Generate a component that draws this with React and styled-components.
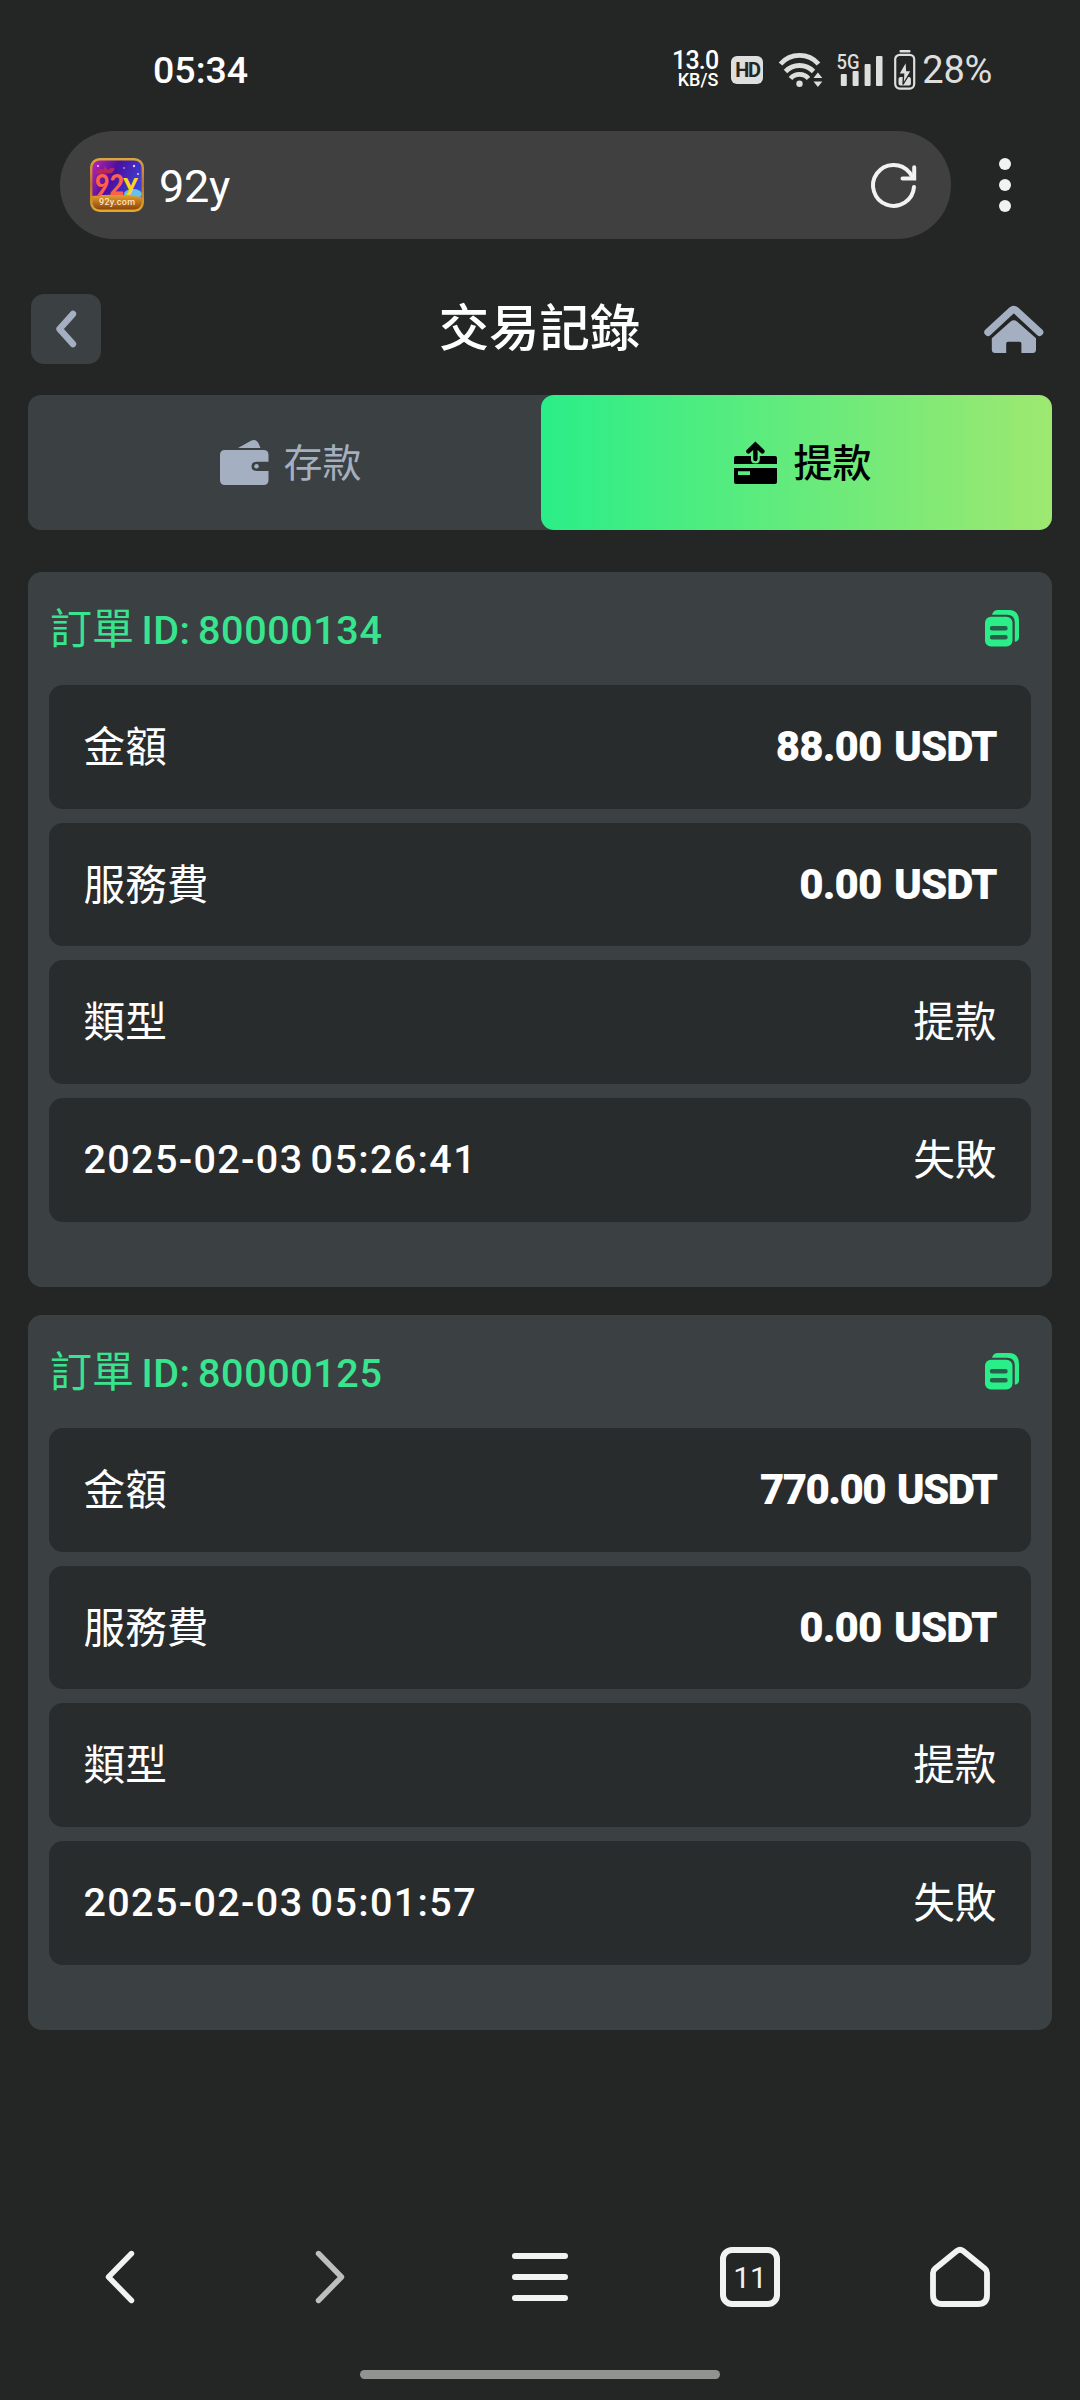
import React from "react";
import styled, { createGlobalStyle } from "styled-components";

const Colors = {
  page: "#242625",
  card: "#3b4042",
  row: "#292c2d",
  bar: "#404040",
  green: "#2aee88",
  lime: "#9ee870",
  steel: "#a4b0c1",
  light: "#f1f2f1",
  status: "#dededd",
  white: "#ffffff"
};

const Fonts = {
  cjk: `"Noto Sans CJK TC", "Noto Sans CJK SC", sans-serif`,
  roboto: `Roboto, "Noto Sans CJK TC", sans-serif`
};

const GlobalStyle = createGlobalStyle`
  * {
    box-sizing: border-box;
  }
  body {
    margin: 0;
    background: ${Colors.page};
  }
  svg {
    display: block;
    flex-shrink: 0;
    overflow: visible;
  }
`;

const Screen = styled.div`
  width: 1080px;
  height: 2400px;
  display: flex;
  flex-direction: column;
  background: ${Colors.page};
  color: ${Colors.white};
  font-family: ${Fonts.cjk};
  overflow: hidden;
`;

// status bar

const StatusBar = styled.div`
  height: 131px;
  display: flex;
  align-items: center;
  justify-content: space-between;
  padding: 8px 88px 0 153px;
  font-family: ${Fonts.roboto};
`;

const Clock = styled.div`
  font-size: 37.5px;
  line-height: 40px;
  font-weight: 500;
`;

const StatusIcons = styled.div`
  display: flex;
  align-items: center;
`;

const Speed = styled.div`
  width: 45px;
  margin-right: 13px;
  display: flex;
  flex-direction: column;
  align-items: flex-end;
  font-weight: 500;
`;

const SpeedValue = styled.span`
  font-size: 25px;
  line-height: 20px;
  letter-spacing: -0.8px;
`;

const SpeedUnit = styled.span`
  font-size: 18px;
  line-height: 17px;
`;

const Hd = styled.div`
  width: 32px;
  height: 28px;
  margin-right: 16px;
  display: flex;
  align-items: center;
  justify-content: center;
  border-radius: 6px;
  background: ${Colors.status};
  color: ${Colors.page};
  font-size: 20px;
  font-weight: 700;
  letter-spacing: -1.5px;
`;

const Signal = styled.div`
  width: 46px;
  height: 33px;
  margin: 0 11px 0 14px;
`;

const Battery = styled.div`
  display: flex;
  align-items: center;
  gap: 6px;
  color: ${Colors.status};
  font-size: 38px;
  line-height: 40px;
  letter-spacing: -0.3px;
`;

// browser bar

const BrowserBar = styled.div`
  display: flex;
  align-items: center;
  padding: 0 60px;
`;

const AddressPill = styled.div`
  width: 891px;
  height: 108px;
  display: flex;
  align-items: center;
  padding: 0 34px 0 30px;
  border-radius: 54px;
  background: ${Colors.bar};
`;

const SiteName = styled.div`
  flex: 1;
  margin-left: 15px;
  padding-top: 3px;
  font-family: ${Fonts.roboto};
  font-size: 45px;
  line-height: 54px;
  letter-spacing: -0.3px;
`;

const Dots = styled.div`
  display: flex;
  flex-direction: column;
  gap: 9px;
  margin-left: 48px;
`;

const Dot = styled.span`
  width: 12px;
  height: 12px;
  border-radius: 50%;
  background: ${Colors.light};
`;

// page

const Header = styled.div`
  display: flex;
  align-items: center;
  justify-content: space-between;
  height: 70px;
  margin: 55px 36px 31px 31px;
`;

const BackButton = styled.button`
  width: 70px;
  height: 70px;
  display: flex;
  align-items: center;
  justify-content: center;
  border: 0;
  padding: 0;
  border-radius: 13px;
  background: ${Colors.card};
`;

const Title = styled.h1`
  margin: 0;
  padding: 0 6px 8px 0;
  font-size: 50.4px;
  line-height: 62px;
  font-weight: 500;
`;

const Tabs = styled.div`
  display: flex;
  height: 135px;
  margin: 0 28px 42px;
  border-radius: 13px;
  background: ${Colors.card};
`;

const Tab = styled.div`
  width: ${props => (props.$active ? "511px" : "513px")};
  display: flex;
  align-items: center;
  justify-content: center;
  gap: ${props => (props.$active ? "16px" : "14px")};
  padding-left: 13px;
  border-radius: 13px;
  font-size: 39px;
  line-height: 56px;
  font-weight: ${props => (props.$active ? 500 : 400)};
  color: ${props => (props.$active ? "#000" : Colors.steel)};
  background: ${props =>
    props.$active
      ? `linear-gradient(90deg, ${Colors.green}, ${Colors.lime})`
      : "transparent"};
`;

const TabLabel = styled.span`
  padding-bottom: 5px;
`;

const Card = styled.section`
  height: 715px;
  margin: 0 28px 28px;
  padding: 0 21px;
  border-radius: 14px;
  background: ${Colors.card};
`;

const CardHead = styled.div`
  display: flex;
  align-items: center;
  justify-content: space-between;
  height: 113px;
  padding: 0 12px 0 1px;
`;

const OrderId = styled.div`
  color: #38e58e;
  font-size: 42px;
  line-height: 60px;
`;

const Latin = styled.span`
  font-family: ${Fonts.roboto};
  font-size: 39.5px;
  font-weight: 500;
  letter-spacing: ${props => (props.$wide ? "1.35px" : "0.6px")};
  word-spacing: ${props => (props.$wide ? "-4px" : "-3px")};
`;

const Rows = styled.div`
  display: flex;
  flex-direction: column;
  gap: 14px;
`;

const Row = styled.div`
  height: 123.7px;
  display: flex;
  align-items: center;
  justify-content: space-between;
  padding: 0 34.5px;
  border-radius: 14px;
  background: ${Colors.row};
`;

const Label = styled.span`
  padding-bottom: 6px;
  font-size: 41.7px;
  line-height: 60px;
`;

const Amount = styled.span`
  font-family: ${Fonts.roboto};
  font-size: 42px;
  line-height: 60px;
  font-weight: 900;
  letter-spacing: ${props => (props.$long ? "-1.6px" : "-0.9px")};
  word-spacing: 3px;
`;

// bottom nav

const NavBar = styled.nav`
  display: grid;
  grid-template-columns: repeat(5, 210px);
  justify-content: center;
  justify-items: center;
  align-items: center;
  height: 60px;
  margin-top: auto;
`;

const TabCount = styled.div`
  width: 60px;
  height: 60px;
  display: flex;
  align-items: center;
  justify-content: center;
  border: 6px solid ${Colors.light};
  border-radius: 12px;
  color: ${Colors.light};
  font-family: ${Fonts.roboto};
  font-size: 30px;
`;

const HomeIndicator = styled.div`
  width: 360px;
  height: 9px;
  margin: 63px auto 21px;
  border-radius: 5px;
  background: #919391;
`;

const WifiIcon = () => (
  <svg width="44" height="34" viewBox="0 0 44 34">
    <g fill="none" stroke={Colors.status} strokeWidth="4.8">
      <path d="M1.5 11A25.4 25.4 0 0 1 39.5 11" />
      <path d="M6.5 18.5A19.3 19.3 0 0 1 34.5 18.5" />
      <path d="M11.5 25.5A12 12 0 0 1 29.5 25.5" />
    </g>
    <circle cx="20.5" cy="30.7" r="3.2" fill={Colors.status} />
    <path d="M34.5 25l4.4-5.5 4.4 5.5zM34.5 28.5h8.8l-4.4 5.5z" fill={Colors.status} />
  </svg>
);

const SignalIcon = () => (
  <svg width="46" height="33" viewBox="0 0 46 33" fill={Colors.status}>
    <text
      x="-0.5"
      y="16"
      fontFamily="Roboto, sans-serif"
      fontSize="21"
      fontWeight="500"
      textLength="23"
      lengthAdjust="spacingAndGlyphs"
    >
      5G
    </text>
    <rect x="3.8" y="21" width="6" height="12" rx="1" />
    <rect x="15.6" y="18" width="6" height="15" rx="1" />
    <rect x="27.6" y="11" width="6" height="22" rx="1" />
    <rect x="39" y="3" width="6.5" height="30" rx="1" />
  </svg>
);

const BatteryIcon = () => (
  <svg width="22" height="40" viewBox="0 0 22 40">
    <rect x="5.5" y="0" width="11" height="2.6" rx="1" fill={Colors.status} />
    <rect x="1.2" y="4.8" width="19" height="33.8" rx="4.5" fill="none" stroke={Colors.status} strokeWidth="2.2" />
    <rect x="4.5" y="27" width="12.4" height="8.6" rx="2" fill={Colors.status} />
    <path
      d="M12.2 11L4.6 24.2h5L9 34.5l8.4-14h-4.6z"
      fill={Colors.status}
      stroke={Colors.page}
      strokeWidth="1.4"
    />
  </svg>
);

const SiteIcon = () => (
  <svg width="54" height="54" viewBox="0 0 54 54">
    <defs>
      <linearGradient id="sky" x1="0" x2="1" y1="0" y2="0.5">
        <stop offset="0" stopColor="#c226b4" />
        <stop offset="0.45" stopColor="#4a0fa0" />
        <stop offset="1" stopColor="#3b45d6" />
      </linearGradient>
      <linearGradient id="ground" x1="0" x2="0" y1="0" y2="1">
        <stop offset="0" stopColor="#e8a030" />
        <stop offset="1" stopColor="#8a4208" />
      </linearGradient>
      <linearGradient id="frame" x1="0" x2="0" y1="0" y2="1">
        <stop offset="0" stopColor="#d9a73a" />
        <stop offset="0.5" stopColor="#b8702a" />
        <stop offset="1" stopColor="#e0a82c" />
      </linearGradient>
    </defs>
    <rect x="2" y="2" width="50" height="50" rx="8" fill="url(#sky)" />
    <ellipse cx="43" cy="36" rx="9" ry="5" fill="#62c4e8" />
    <path d="M2 38q25-3 50 1v5a8 8 0 0 1-8 8H10a8 8 0 0 1-8-8z" fill="url(#ground)" />
    <path d="M6 14q4-5 7-2l2-4 3 4q4-4 7-1l-3 4-15 1z" fill="#b8285a" />
    <g fill="#e9c8ff">
      <circle cx="44" cy="8" r="1.2" />
      <circle cx="34" cy="10" r="0.8" />
      <circle cx="48" cy="16" r="1" />
      <circle cx="8" cy="8" r="1" />
    </g>
    <g fontFamily="Lato, sans-serif" fontWeight="900">
      <text x="5" y="37" fontSize="28" fill="#ff6048" textLength="29" lengthAdjust="spacingAndGlyphs">
        92
      </text>
      <text x="33" y="33" fontSize="25" fill="#ffd21c" textLength="15" lengthAdjust="spacingAndGlyphs">
        y
      </text>
    </g>
    <text
      x="9"
      y="46.5"
      fontFamily="Roboto, sans-serif"
      fontSize="9"
      fontWeight="500"
      fill="#ffe2bc"
      textLength="36"
    >
      92y.com
    </text>
    <rect x="1.2" y="1.2" width="51.6" height="51.6" rx="8.5" fill="none" stroke="url(#frame)" strokeWidth="2.4" />
  </svg>
);

const ReloadIcon = () => (
  <svg width="46" height="46" viewBox="0 0 46 46" fill="none" stroke={Colors.light} strokeWidth="4" strokeLinecap="round">
    <path d="M43 25A20.5 20.5 0 1 1 38.5 10.5L41.5 15" />
    <path d="M43.2 5.2V16.5H31.5" strokeLinejoin="miter" />
  </svg>
);

const BackIcon = () => (
  <svg width="24" height="38" viewBox="0 0 24 38">
    <path d="M19 4L5.5 19 19 34" fill="none" stroke={Colors.steel} strokeWidth="6.4" strokeLinecap="round" strokeLinejoin="round" />
  </svg>
);

const HouseIcon = () => (
  <svg width="60" height="48" viewBox="0 0 60 48" fill={Colors.steel}>
    <path
      d="M4 27.3L27.4 5.6Q29.8 3.6 32.2 5.6L55.6 27.3"
      fill="none"
      stroke={Colors.steel}
      strokeWidth="7.4"
      strokeLinecap="round"
      strokeLinejoin="round"
    />
    <path d="M7.8 33.3L26.6 16.4Q29.8 14 33 16.4L52 33.3V44.5Q52 48 48.5 48H37.4V38.5Q37.4 36.7 35.6 36.7H24Q22.2 36.7 22.2 38.5V48H11.3Q7.8 48 7.8 44.5z" />
  </svg>
);

const WalletIcon = () => (
  <svg width="49" height="45" viewBox="0 0 49 45" fill={Colors.steel}>
    <path d="M18 8L31 0.8Q36-1.5 38.6 3.5L40.5 8z" />
    <path d="M5 10H43.5Q48.5 10 48.5 15V21.8H37Q31.5 21.8 31.5 26.4T37 31H48.5V40Q48.5 45 43.5 45H5Q0 45 0 40V15Q0 10 5 10z" />
    <circle cx="36.5" cy="26.3" r="2.2" />
  </svg>
);

const WithdrawIcon = () => (
  <svg width="43" height="42" viewBox="0 0 43 42">
    <path d="M2 14H17V17.5Q17 21.5 21.4 21.5T25.8 17.5V14H41Q43 14 43 16V22H0V16Q0 14 2 14z" />
    <path d="M0 26H43V40Q43 42 41 42H2Q0 42 0 40zM4 29.2V33H16V29.2z" fillRule="evenodd" />
    <path d="M21.4 3.2V17M14.4 9.4L21.4 2.6L28.4 9.4" fill="none" stroke="#000" strokeWidth="4.4" strokeLinecap="round" />
  </svg>
);

const CopyIcon = () => (
  <svg width="34" height="37" viewBox="0 0 34 37">
    <path d="M7 4.8Q8 0 13 0H23.5Q34 0 34 11V27.5Q34 31 29.8 31.8V12.5Q29.8 4.8 22 4.8z" fill={Colors.green} />
    <rect x="0" y="6.8" width="27.5" height="29.8" rx="6" fill={Colors.green} />
    <path d="M7 18.2H20.5M7 27.3H20.5" stroke="#27604a" strokeWidth="4.4" strokeLinecap="round" />
  </svg>
);

const ChevronIcon = ({ forward }) => (
  <svg width="60" height="60" viewBox="0 0 60 60">
    <path
      d={forward ? "M18.5 6.5L41.5 30 18.5 53.5" : "M41.5 6.5L18.5 30 41.5 53.5"}
      fill="none"
      stroke={forward ? "#bdbebd" : Colors.light}
      strokeWidth="5.4"
      strokeLinecap="round"
      strokeLinejoin="round"
    />
  </svg>
);

const MenuIcon = () => (
  <svg width="60" height="60" viewBox="0 0 60 60">
    <path d="M5 9H55M5 30H55M5 51H55" stroke={Colors.light} strokeWidth="6" strokeLinecap="round" />
  </svg>
);

const HomeIcon = () => (
  <svg width="60" height="60" viewBox="0 0 60 60">
    <path
      d="M3 26Q3 23.5 5 21.8L27 3.8Q30 1.6 33 3.8L55 21.8Q57 23.5 57 26V48Q57 57 48 57H12Q3 57 3 48z"
      fill="none"
      stroke={Colors.light}
      strokeWidth="5.8"
    />
  </svg>
);

const orders = [
  { id: "80000134", amount: "88.00 USDT", fee: "0.00 USDT", time: "2025-02-03 05:26:41" },
  { id: "80000125", amount: "770.00 USDT", fee: "0.00 USDT", time: "2025-02-03 05:01:57" }
];

const OrderCard = ({ order }) => (
  <Card>
    <CardHead>
      <OrderId>
        訂單<Latin> ID: {order.id}</Latin>
      </OrderId>
      <CopyIcon />
    </CardHead>
    <Rows>
      <Row>
        <Label>金額</Label>
        <Amount $long={order.amount.length > 10}>{order.amount}</Amount>
      </Row>
      <Row>
        <Label>服務費</Label>
        <Amount>{order.fee}</Amount>
      </Row>
      <Row>
        <Label>類型</Label>
        <Label>提款</Label>
      </Row>
      <Row>
        <Latin $wide>{order.time}</Latin>
        <Label>失敗</Label>
      </Row>
    </Rows>
  </Card>
);

const App = () => {
  return (
    <Screen>
      <GlobalStyle />
      <StatusBar>
        <Clock>05:34</Clock>
        <StatusIcons>
          <Speed>
            <SpeedValue>13.0</SpeedValue>
            <SpeedUnit>KB/S</SpeedUnit>
          </Speed>
          <Hd>HD</Hd>
          <WifiIcon />
          <Signal>
            <SignalIcon />
          </Signal>
          <Battery>
            <BatteryIcon />
            28%
          </Battery>
        </StatusIcons>
      </StatusBar>
      <BrowserBar>
        <AddressPill>
          <SiteIcon />
          <SiteName>92y</SiteName>
          <ReloadIcon />
        </AddressPill>
        <Dots>
          <Dot />
          <Dot />
          <Dot />
        </Dots>
      </BrowserBar>
      <Header>
        <BackButton>
          <BackIcon />
        </BackButton>
        <Title>交易記錄</Title>
        <HouseIcon />
      </Header>
      <Tabs>
        <Tab>
          <WalletIcon />
          <TabLabel>存款</TabLabel>
        </Tab>
        <Tab $active>
          <WithdrawIcon />
          <TabLabel>提款</TabLabel>
        </Tab>
      </Tabs>
      {orders.map(order => (
        <OrderCard key={order.id} order={order} />
      ))}
      <NavBar>
        <ChevronIcon />
        <ChevronIcon forward />
        <MenuIcon />
        <TabCount>11</TabCount>
        <HomeIcon />
      </NavBar>
      <HomeIndicator />
    </Screen>
  );
};

export default App;
